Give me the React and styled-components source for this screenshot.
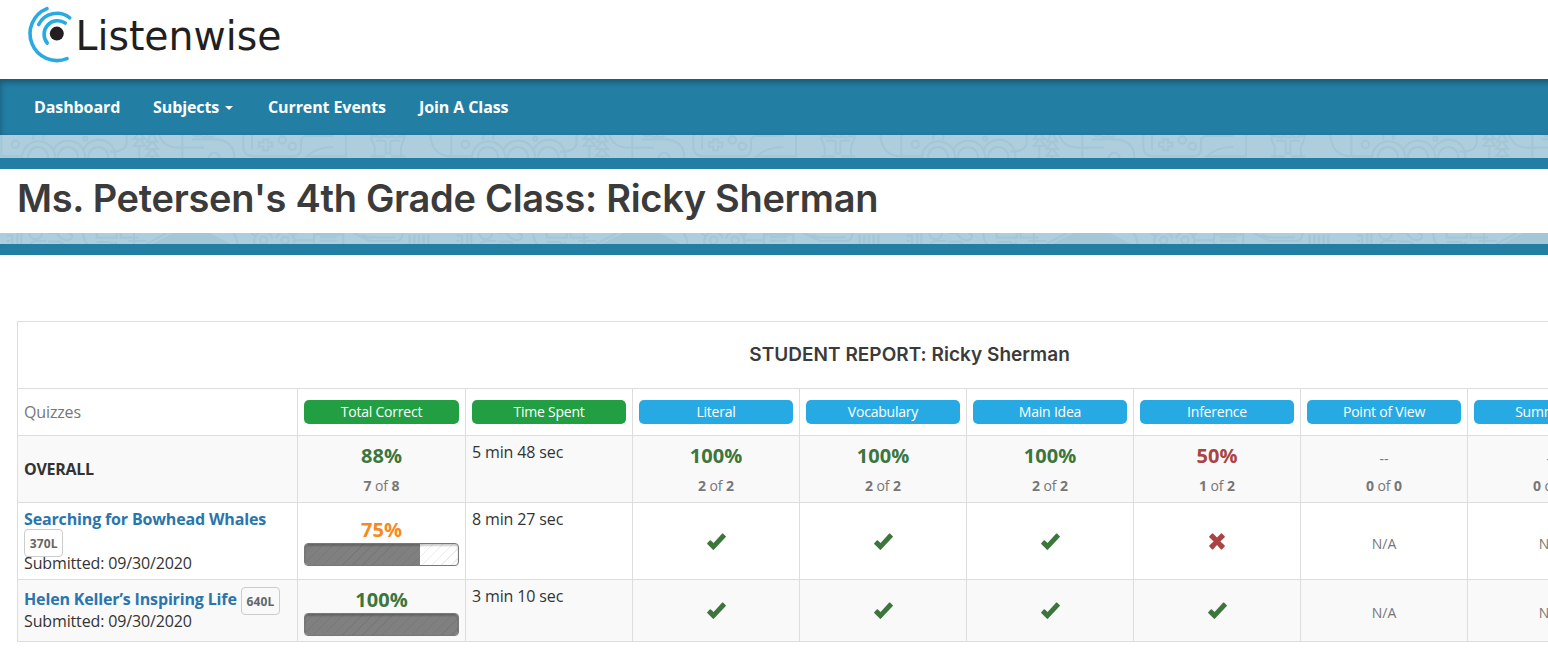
import React from 'react';
import styled, { createGlobalStyle, css } from 'styled-components';

const Global = createGlobalStyle`
  * { box-sizing: border-box; }
  html, body { margin: 0; padding: 0; background: #fff; }
  body {
    font-family: "Open Sans", "Liberation Sans", sans-serif;
    font-size: 16px;
    line-height: 22px;
    color: #333;
    overflow: hidden;
  }
`;

const Page = styled.div`
  width: 100%;
  height: 649px;
  overflow: hidden;
`;

const Header = styled.header`
  height: 79px;
  padding: 5px 0 0 27px;
`;

const LogoSvg = styled.svg`
  display: block;
  overflow: visible;
`;

const NavBar = styled.nav`
  display: flex;
  align-items: center;
  gap: 33px;
  height: 56px;
  margin-right: -20px;
  padding-left: 34px;
  background: #237ea4;
  box-shadow: inset 0 3px 6px rgba(0, 0, 0, 0.33);
`;

const NavLink = styled.a`
  display: flex;
  align-items: center;
  width: ${(p) => p.$w}px;
  color: #fff;
  font-size: 16px;
  font-weight: 700;
  letter-spacing: -0.1px;
  white-space: nowrap;
`;

const Caret = styled.span`
  margin: 2px 0 0 6px;
  border-top: 4px solid #fff;
  border-left: 4.5px solid transparent;
  border-right: 4.5px solid transparent;
`;

const Band = styled.div`
  height: ${(p) => p.$h}px;
  background: #aecddd;
  overflow: hidden;
  svg { display: block; }
`;

const Stripe = styled.div`
  height: 11px;
  background: #237ea4;
`;

const TitleBar = styled.div`
  height: 64px;
  padding-left: 17px;
`;

const PageTitle = styled.h1`
  margin: 0;
  font-family: Inter, "Liberation Sans", sans-serif;
  font-size: 38px;
  line-height: 58px;
  font-weight: 600;
  letter-spacing: -0.29px;
  color: #3b3b3b;
  white-space: nowrap;
`;

const Report = styled.table`
  width: 1785px;
  margin: 66px 0 0 17px;
  border-collapse: collapse;
  table-layout: fixed;
`;

const Row = styled.tr`
  height: ${(p) => p.$h}px;
  background: ${(p) => (p.$shade ? '#f9f9f9' : '#fff')};
`;

const Cell = styled.td`
  padding: ${(p) => p.$top || 0}px 6px 0;
  border: 1px solid #ddd;
  vertical-align: top;
  text-align: ${(p) => (p.$center ? 'center' : 'left')};
  letter-spacing: ${(p) => (p.$center ? 'normal' : '-0.14px')};
  white-space: nowrap;
`;

const ReportTitle = styled.h2`
  margin: 0;
  font-family: Inter, "Liberation Sans", sans-serif;
  font-size: 19px;
  line-height: 22px;
  font-weight: 600;
  letter-spacing: 0.03px;
  color: #3b3b3b;
`;

const Muted = styled.div`
  color: #777;
`;

const Pill = styled.div`
  height: 24px;
  border-radius: 5px;
  background: ${(p) => (p.$green ? '#219f42' : '#27aae3')};
  color: #fff;
  font-size: 14px;
  line-height: 24px;
  letter-spacing: -0.22px;
`;

const Overall = styled.div`
  font-weight: 700;
  letter-spacing: -0.3px;
`;

const tones = { good: '#3c763d', warn: '#f58a1f', bad: '#a94442' };

const Percent = styled.div`
  font-size: 20px;
  line-height: 22px;
  font-weight: 700;
  color: ${(p) => tones[p.$tone]};
`;

const Dashes = styled.div`
  font-size: 14px;
  line-height: 22px;
  color: #777;
`;

const NoScore = styled(Dashes)`
  height: 22px;
  line-height: 27px;
`;

const OfCount = styled.div`
  margin-top: 8px;
  font-size: 14px;
  line-height: 22px;
  letter-spacing: -0.1px;
  color: #777;
`;

const QuizLine = styled.div`
  display: flex;
  flex-direction: ${(p) => (p.$stack ? 'column' : 'row')};
  align-items: flex-start;
  ${(p) => !p.$stack && css`height: 22px; gap: 4px;`}
`;

const QuizLink = styled.a`
  color: #2a75ad;
  font-weight: 700;
  letter-spacing: -0.15px;
`;

const Lexile = styled.span`
  height: 28px;
  margin: -1px 0 -5px;
  padding: 0 4.8px;
  border: 1px solid #ccc;
  border-radius: 4px;
  font-size: 12px;
  line-height: 27px;
  font-weight: 700;
  letter-spacing: 0.1px;
  color: #666;
`;

const Meter = styled.div`
  height: 23px;
  margin-top: 2px;
  border: 1px solid #777;
  border-radius: 4px;
  overflow: hidden;
  background: repeating-linear-gradient(135deg, #fff 0 6px, #ededed 6px 7px);
  position: relative;
  &::after {
    content: "";
    position: absolute;
    inset: 0;
    border-radius: 3px;
    box-shadow: inset 0 2px 2px rgba(0, 0, 0, 0.2);
  }
`;

const MeterFill = styled.div`
  height: 100%;
  background: repeating-linear-gradient(135deg, #808080 0 6px, #787878 6px 7px);
`;

const Mark = styled.svg`
  display: block;
  margin: 0 auto;
`;

function Logo() {
  return (
    <LogoSvg width="256" height="62" viewBox="27 5 256 62">
      <g fill="none" stroke="#29abe2" strokeWidth="3.6" strokeLinecap="round">
        <path d="M47 8.6A26.8 26.8 0 1 0 67 58.6" />
        <path d="M38.7 24.5A20.4 20.4 0 0 1 69.7 17.9" />
        <path d="M47.2 43A13.6 13.6 0 0 1 65.2 23" />
      </g>
      <circle cx="56.8" cy="33.6" r="7" fill="#231f20" />
      <text
        x="75.5"
        y="50"
        textLength="206"
        lengthAdjust="spacingAndGlyphs"
        fontFamily="'DejaVu Sans', sans-serif"
        fontSize="41.5"
        fill="#231f20"
      >
        Listenwise
      </text>
    </LogoSvg>
  );
}

function ToysBand() {
  return (
    <Band $h={23}>
      <svg width="1548" height="23">
        <defs>
          <pattern id="toys" width="1350" height="69" patternUnits="userSpaceOnUse" patternTransform="scale(0.33333)">
            <g fill="none" stroke="#a3c7d7" strokeWidth="6.5">
              <path d="M4 0V64H66M100 0V14M130 0V14M380 0V20Q380 50 330 50" />
              <circle cx="46" cy="28" r="11" />
              <circle cx="256" cy="11" r="6" />
              <path d="M66 69A50 50 0 0 1 160 45A50 50 0 0 1 250 45A50 50 0 0 1 346 69M160 45Q166 56 166 69M250 45Q256 56 256 69" />
              <circle cx="114" cy="66" r="30" />
              <circle cx="204" cy="66" r="30" />
              <circle cx="295" cy="66" r="30" />
              <path d="M412 0L401 12H435L424 0M418 12L401 33H436L420 12M418 33V69" />
              <path d="M452 0L441 20H472L460 0M456 20L439 42H474L458 20M456 42L439 63H474L458 42M456 63V69" />
              <path d="M478 0Q490 38 535 38H612M547 0V69M575 13H640Q703 13 703 69M580 0Q590 8 600 0Q612 12 622 3Q634 12 644 2" />
              <path d="M627 69A16 16 0 0 1 659 69" />
              <path d="M730 0V35Q730 64 765 64H880Q903 64 903 40V20Q903 3 922 3H1000M756 0V45M1038 0V64H920Q950 36 1000 36" />
              <path d="M790 13H804V22H817V35H804V46H790V35H777V22H790Z" />
              <circle cx="847" cy="15" r="11" />
              <circle cx="877" cy="34" r="11" />
              <path d="M1113 0Q1120 8 1130 3Q1142 12 1153 3Q1165 12 1176 3Q1188 12 1200 3Q1210 8 1216 0M1112 6L1124 35V64M1215 6L1203 35V64M1128 17H1150Q1157 17 1157 24V55H1171V24Q1171 17 1178 17H1200M1112 64H1155M1173 64H1216" />
              <path d="M1291 0Q1295 60 1350 64" />
            </g>
          </pattern>
        </defs>
        <rect width="1548" height="23" fill="url(#toys)" />
      </svg>
    </Band>
  );
}

function TownBand() {
  return (
    <Band $h={11}>
      <svg width="1548" height="11">
        <defs>
          <pattern id="town" width="1350" height="33" patternUnits="userSpaceOnUse" patternTransform="scale(0.33333)">
            <path d="M455 33L520 0H630L692 33Z" fill="#a3c7d7" />
            <g fill="none" stroke="#a3c7d7" strokeWidth="6.5">
              <path d="M20 8H36V33M20 24H30M52 33V0M88 0A18 18 0 0 0 126 0M64 0V33M92 33Q96 24 110 24H140M145 0H170Q184 22 200 22Q218 20 216 6L205 0M145 26H180L190 33" />
              <path d="M250 0Q250 24 262 33M290 0V14H350V0M362 0V14H415M290 27H330L338 33M350 27L342 33M385 24H440M402 0V33" />
              <path d="M440 33L500 0M700 0Q712 15 712 33M752 0L768 10M890 0L876 12M884 22H942M942 0V33M942 4H1030V33M960 12H1010M960 23H1010M1060 0L1110 24H1190Q1205 24 1208 0M1084 6L1106 13H1185" />
              <circle cx="791" cy="22" r="11" />
              <circle cx="855" cy="22" r="11" />
              <path d="M764 33A27 27 0 0 1 818 16M828 16A27 27 0 0 1 882 33" />
              <path d="M1229 5V33M1243 5V33M1257 5V33M1271 5V33M1285 5V33" strokeWidth="8" />
            </g>
          </pattern>
        </defs>
        <rect width="1548" height="11" fill="url(#town)" />
      </svg>
    </Band>
  );
}

function Check() {
  return (
    <Mark width="20" height="18" viewBox="-0.6 0 20 18">
      <path d="M.6 10.2 3.1 7.4Q3.7 7 4.3 7.5L7 10.1 15.6.6Q16 .2 16.4.6L19.2 3.3Q19.5 3.7 19.2 4.1L7.2 16.8Q6.8 17.1 6.4 16.8L.6 11Q.3 10.6.6 10.2Z" fill="#3c763d" />
    </Mark>
  );
}

function Cross() {
  return (
    <Mark width="16" height="17" viewBox="0 0 16 17">
      <path d="M.3 3.3 3.1.4Q3.6.1 4 .4L8 4.6 12 .4Q12.4.1 12.9.4L15.7 3.3Q16 3.8 15.7 4.2L11.4 8.4 15.7 12.6Q16 13 15.7 13.5L12.9 16.4Q12.4 16.7 12 16.4L8 12.1 4 16.4Q3.6 16.7 3.1 16.4L.3 13.5Q0 13 .3 12.6L4.6 8.4.3 4.2Q0 3.8.3 3.3Z" fill="#a94442" />
    </Mark>
  );
}

const skills = ['Literal', 'Vocabulary', 'Main Idea', 'Inference', 'Point of View', 'Summarize'];

const overall = [
  { score: '100%', tone: 'good', got: 2, of: 2 },
  { score: '100%', tone: 'good', got: 2, of: 2 },
  { score: '100%', tone: 'good', got: 2, of: 2 },
  { score: '50%', tone: 'bad', got: 1, of: 2 },
  { got: 0, of: 0 },
  { got: 0, of: 0 },
];

const quizzes = [
  {
    title: 'Searching for Bowhead Whales', level: '370L', stack: true, height: 77,
    percent: 75, tone: 'warn', time: '8 min 27 sec', textTop: 5, scoreTop: 16, markTop: 30, naTop: 30,
    marks: ['y', 'y', 'y', 'n', '', ''],
  },
  {
    title: 'Helen Keller’s Inspiring Life', level: '640L', shade: true, height: 62,
    percent: 100, tone: 'good', time: '3 min 10 sec', textTop: 8, scoreTop: 9, markTop: 22, naTop: 22,
    marks: ['y', 'y', 'y', 'y', '', ''],
  },
];

function Count({ got, of }) {
  return <OfCount><b>{got}</b> of <b>{of}</b></OfCount>;
}

function QuizRow({ quiz }) {
  return (
    <Row $h={quiz.height} $shade={quiz.shade}>
      <Cell $top={quiz.textTop}>
        <QuizLine $stack={quiz.stack}>
          <QuizLink>{quiz.title}</QuizLink>
          <Lexile>{quiz.level}</Lexile>
        </QuizLine>
        <div>Submitted: 09/30/2020</div>
      </Cell>
      <Cell $center $top={quiz.scoreTop}>
        <Percent $tone={quiz.tone}>{quiz.percent}%</Percent>
        <Meter><MeterFill style={{ width: `${quiz.percent}%` }} /></Meter>
      </Cell>
      <Cell $top={5}>{quiz.time}</Cell>
      {quiz.marks.map((m, i) => (
        <Cell key={i} $center $top={m ? quiz.markTop : quiz.naTop}>
          {m === 'y' && <Check />}
          {m === 'n' && <Cross />}
          {!m && <Dashes>N/A</Dashes>}
        </Cell>
      ))}
      <Cell />
    </Row>
  );
}

export default function App() {
  return (
    <Page>
      <Global />
      <Header><Logo /></Header>
      <NavBar>
        <NavLink $w={86}>Dashboard</NavLink>
        <NavLink $w={82}>Subjects<Caret /></NavLink>
        <NavLink $w={118}>Current Events</NavLink>
        <NavLink $w={90}>Join A Class</NavLink>
      </NavBar>
      <ToysBand />
      <Stripe />
      <TitleBar><PageTitle>Ms. Petersen's 4th Grade Class: Ricky Sherman</PageTitle></TitleBar>
      <TownBand />
      <Stripe />
      <Report>
        <colgroup>
          <col style={{ width: 280 }} />
          <col style={{ width: 168 }} />
          {[...Array(8)].map((_, i) => <col key={i} style={{ width: 167 }} />)}
        </colgroup>
        <tbody>
          <Row $h={67}>
            <Cell colSpan={10} $center $top={22}>
              <ReportTitle>STUDENT REPORT: Ricky Sherman</ReportTitle>
            </Cell>
          </Row>
          <Row $h={47}>
            <Cell $top={12}><Muted>Quizzes</Muted></Cell>
            <Cell $center $top={11}><Pill $green>Total Correct</Pill></Cell>
            <Cell $center $top={11}><Pill $green>Time Spent</Pill></Cell>
            {skills.map((s) => <Cell key={s} $center $top={11}><Pill>{s}</Pill></Cell>)}
            <Cell />
          </Row>
          <Row $h={67} $shade>
            <Cell $top={22}><Overall>OVERALL</Overall></Cell>
            <Cell $center $top={9}>
              <Percent $tone="good">88%</Percent>
              <Count got={7} of={8} />
            </Cell>
            <Cell $top={5}>5 min 48 sec</Cell>
            {overall.map((o, i) => (
              <Cell key={i} $center $top={9}>
                {o.score ? <Percent $tone={o.tone}>{o.score}</Percent> : <NoScore>--</NoScore>}
                <Count got={o.got} of={o.of} />
              </Cell>
            ))}
            <Cell />
          </Row>
          {quizzes.map((q) => <QuizRow key={q.title} quiz={q} />)}
        </tbody>
      </Report>
    </Page>
  );
}
